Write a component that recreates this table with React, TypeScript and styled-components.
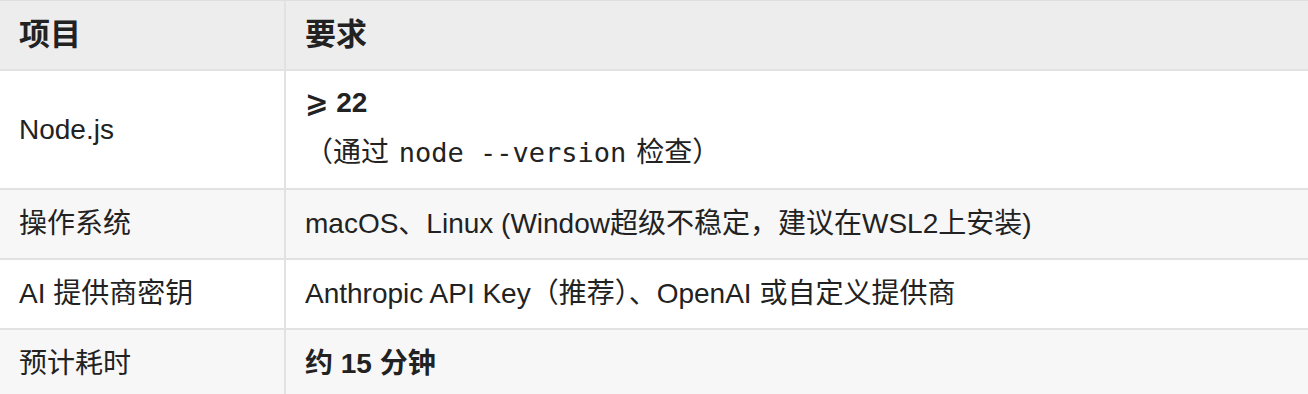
import React from 'react'
import styled, { createGlobalStyle } from 'styled-components'

const GlobalStyle = createGlobalStyle`
  html, body {
    margin: 0;
    padding: 0;
    background: #ffffff;
  }

  body {
    width: 1308px;
    height: 394px;
    overflow: hidden;
    font-family: 'Liberation Sans', 'Noto Sans CJK SC', 'DejaVu Sans', sans-serif;
    color: #222222;
  }
`

const Table = styled.div`
  width: 1308px;
  border-top: 1px solid #dedede;
`

const Row = styled.div<{ $bg: string }>`
  display: grid;
  grid-template-columns: 284px 1fr;
  background: ${ ({ $bg }) => $bg };
  border-bottom: 2px solid #e2e2e2;
`

const Cell = styled.div<{ $head?: boolean; $divider?: boolean; $middle?: boolean }>`
  padding: 13px 19px;
  font-size: ${ ({ $head }) => ($head ? '31px' : '28px') };
  font-weight: ${ ({ $head }) => ($head ? 700 : 400) };
  line-height: 42px;
  white-space: nowrap;
  align-self: ${ ({ $middle }) => ($middle ? 'center' : 'stretch') };
  border-left: ${ ({ $divider }) => ($divider ? '2px solid #e2e2e2' : 'none') };
`

const Stack = styled(Cell)`
  display: flex;
  flex-direction: column;
  justify-content: center;
  align-items: flex-start;
  padding-top: 11px;
  padding-bottom: 14px;
  gap: 8px;
`

const Strong = styled.strong`
  font-weight: 700;
`

const Code = styled.code`
  font-family: 'DejaVu Sans Mono', 'Liberation Mono', monospace;
  font-size: 27px;
  padding: 0 2px;
`

const HEAD = '#ededed'
const ODD = '#ffffff'
const EVEN = '#f7f7f7'

export default function App() {
  return (
    <>
      <GlobalStyle />
      <Table>
        <Row $bg={HEAD}>
          <Cell $head>项目</Cell>
          <Cell $head $divider>要求</Cell>
        </Row>
        <Row $bg={ODD}>
          <Cell $middle>Node.js</Cell>
          <Stack $divider>
            <Strong>⩾ 22</Strong>
            <span>
              （通过 <Code>node --version</Code> 检查）
            </span>
          </Stack>
        </Row>
        <Row $bg={EVEN}>
          <Cell>操作系统</Cell>
          <Cell $divider>macOS、Linux (Window超级不稳定，建议在WSL2上安装)</Cell>
        </Row>
        <Row $bg={ODD}>
          <Cell>AI 提供商密钥</Cell>
          <Cell $divider>Anthropic API Key（推荐）、OpenAI 或自定义提供商</Cell>
        </Row>
        <Row $bg={EVEN}>
          <Cell>预计耗时</Cell>
          <Cell $divider>
            <Strong>约 15 分钟</Strong>
          </Cell>
        </Row>
      </Table>
    </>
  )
}
